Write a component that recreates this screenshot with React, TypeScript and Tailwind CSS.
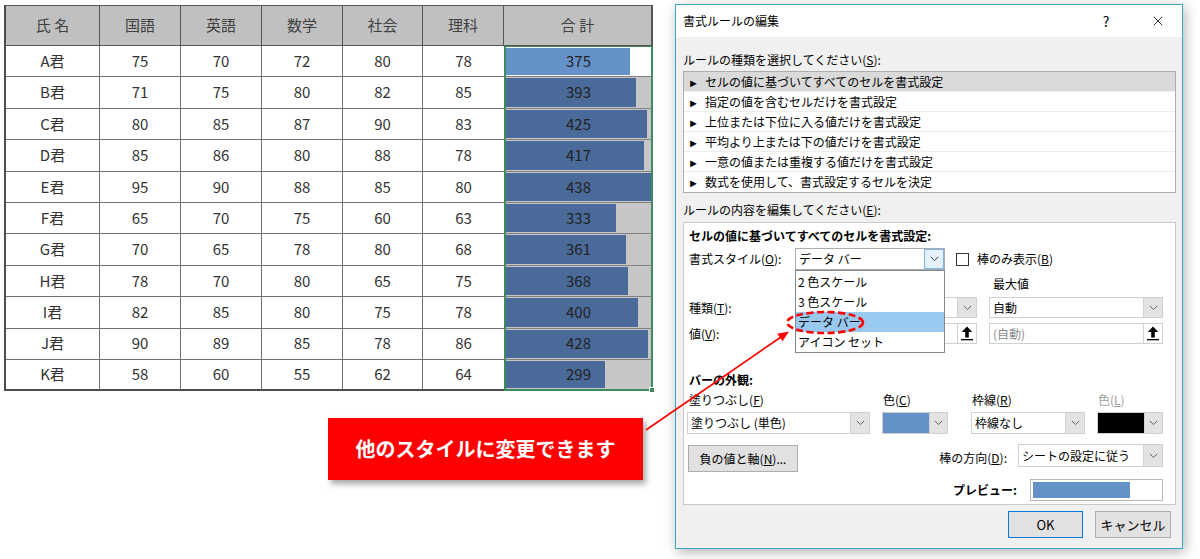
import { X } from "lucide-react";

const scores: [string, number, number, number, number, number, number][] = [
  ["A君", 75, 70, 72, 80, 78, 375],
  ["B君", 71, 75, 80, 82, 85, 393],
  ["C君", 80, 85, 87, 90, 83, 425],
  ["D君", 85, 86, 80, 88, 78, 417],
  ["E君", 95, 90, 88, 85, 80, 438],
  ["F君", 65, 70, 75, 60, 63, 333],
  ["G君", 70, 65, 78, 80, 68, 361],
  ["H君", 78, 70, 80, 65, 75, 368],
  ["I君", 82, 85, 80, 75, 78, 400],
  ["J君", 90, 89, 85, 78, 86, 428],
  ["K君", 58, 60, 55, 62, 64, 299],
];

const heads = ["氏 名", "国語", "英語", "数学", "社会", "理科", "合 計"];

const ruleTypes = [
  "セルの値に基づいてすべてのセルを書式設定",
  "指定の値を含むセルだけを書式設定",
  "上位または下位に入る値だけを書式設定",
  "平均より上または下の値だけを書式設定",
  "一意の値または重複する値だけを書式設定",
  "数式を使用して、書式設定するセルを決定",
];

const MAX = 438;

function ScoreTable() {
  return (
    <div className="ml-[4px] border-l-2 border-[#4d4d4d] grid grid-cols-[94px_81px_81px_81px_80px_81px_149px] text-[15px] text-[#333]">
      {heads.map((h, i) => (
        <div
          key={h}
          className={`h-[41px] flex items-center justify-center bg-[#c0c0c0] text-[#404040] border-t border-b border-r border-[#555] ${
            i === 6 ? "border-r-2" : ""
          }`}
        >
          {h}
        </div>
      ))}
      {scores.map((row, r) => {
        const last = r === scores.length - 1;
        const total = row[6];
        return [
          ...row.slice(0, 6).map((v, c) => (
            <div
              key={`${r}-${c}`}
              className={`h-[31.4px] flex items-center justify-center bg-white border-[#707070] ${
                c < 5 ? "border-r" : ""
              } ${last ? "border-b-2 border-b-[#4d4d4d]" : "border-b"}`}
            >
              {v}
            </div>
          )),
          <div
            key={`${r}-t`}
            className={`relative h-[31.4px] border-x-2 border-[#3f8a5d] ${
              r === 0 ? "border-t border-t-[#3f8a5d] bg-white" : "bg-[#c6c6c6]"
            } ${last ? "border-b-2" : "border-b border-b-[#808080]"}`}
          >
            <div
              className={`absolute left-0 top-[1px] bottom-[1px] ${
                r === 0 ? "bg-[#6591c9]" : "bg-[#4a6a9a]"
              }`}
              style={{ width: `${(total / MAX) * 100}%` }}
            />
            <span className="relative flex h-full items-center justify-center text-[#222]">
              {total}
            </span>
            {last && (
              <div className="absolute -right-[4px] -bottom-[4px] w-[6px] h-[6px] bg-[#3f8a5d] border border-white" />
            )}
          </div>,
        ];
      })}
    </div>
  );
}

function Chevron({ color = "#666" }: { color?: string }) {
  return (
    <svg width="9" height="6" viewBox="0 0 9 6">
      <path d="M0.8 0.8 L4.5 4.6 L8.2 0.8" fill="none" stroke={color} strokeWidth="1" />
    </svg>
  );
}

function UpArrow() {
  return (
    <svg width="12" height="15" viewBox="0 0 12 15">
      <path d="M6 0.5 L11.2 6 L7.8 6 L7.8 11.5 L4.2 11.5 L4.2 6 L0.8 6 Z" fill="#000" />
      <rect x="0" y="13" width="12" height="1.3" fill="#000" />
    </svg>
  );
}

function Select({
  text = "",
  className = "",
}: {
  text?: string;
  className?: string;
}) {
  return (
    <div className={`h-full flex border border-[#d0d0d0] bg-white ${className}`}>
      <span className="flex-1 pl-[3px] flex items-center">{text}</span>
      <div className="w-[19px] flex items-center justify-center bg-[#e3e3e3] border-l border-[#d0d0d0]">
        <Chevron />
      </div>
    </div>
  );
}

function ValueInput({ text = "", className = "" }: { text?: string; className?: string }) {
  return (
    <div className={`h-full flex border border-[#d0d0d0] bg-white ${className}`}>
      <span className="flex-1 pl-[3px] flex items-center text-[#8a8a8a]">{text}</span>
      <div className="w-[19px] flex items-center justify-center border-l border-[#d0d0d0]">
        <UpArrow />
      </div>
    </div>
  );
}

function StyleSelect() {
  const items = ["2 色スケール", "3 色スケール", "データ バー", "アイコン セット"];
  return (
    <div className="relative w-[150px] h-full">
      <div className="h-full flex border border-[#adadad] bg-white">
        <span className="flex-1 pl-[3px] flex items-center">データ バー</span>
        <div className="w-[20px] flex items-center justify-center bg-[#e5f1fb] border border-[#7eb4ea]">
          <Chevron color="#444" />
        </div>
      </div>
      <div className="absolute left-0 top-[22px] w-[150px] z-20 bg-white border border-[#828790] pt-[1px]">
        {items.map((it) => (
          <div
            key={it}
            className={`h-[20px] flex items-center pl-[2px] whitespace-pre ${
              it === "データ バー" ? "bg-[#99c9ef]" : ""
            }`}
          >
            {it}
          </div>
        ))}
      </div>
    </div>
  );
}

function Dialog() {
  return (
    <div className="ml-[21px] mt-[4px] w-[508px] h-[545px] shrink-0 border border-[#3ba6c6] bg-[#f0f0f0] shadow-[2px_3px_12px_rgba(0,0,0,0.3)] flex flex-col text-[12px] leading-[16px] text-black">
      <div className="h-[32px] bg-white flex items-center pl-[7px]">
        <span className="flex-1">書式ルールの編集</span>
        <span className="w-[20px] text-center text-[14px] mr-[34px]">?</span>
        <X size={16} strokeWidth={1.2} className="mr-[16px]" />
      </div>
      <div className="pl-[7px] pr-[5px] pt-[15px] flex flex-col">
        <div className="h-[16px]">
          ルールの種類を選択してください(<u>S</u>):
        </div>
        <div className="mt-[3px] w-[493px] border border-[#adadad] bg-white">
          {ruleTypes.map((t, i) => (
            <div
              key={t}
              className={`h-[20px] flex items-center pl-[4px] ${i === 0 ? "bg-[#dadada]" : ""} ${
                i < 5 ? "border-b border-[#ededed]" : ""
              }`}
            >
              <span className="w-[17px] text-[11px] leading-[16px]">►</span>
              {t}
            </div>
          ))}
        </div>
        <div className="mt-[9px] h-[16px]">
          ルールの内容を編集してください(<u>E</u>):
        </div>
        <div className="mt-[4px] w-[493px] h-[283px] border border-[#c9c9c9] bg-white flex flex-col">
          <div className="mt-[5px] pl-[5px] h-[16px] font-bold">
            セルの値に基づいてすべてのセルを書式設定:
          </div>
          <div className="mt-[4px] h-[22px] pl-[5px] flex items-center">
            <span className="w-[106px]">
              書式スタイル(<u>O</u>):
            </span>
            <StyleSelect />
            <div className="ml-[11px] w-[13px] h-[13px] border border-[#333] bg-white" />
            <span className="ml-[8px]">
              棒のみ表示(<u>B</u>)
            </span>
          </div>
          <div className="mt-[6px] h-[16px] pl-[5px] flex">
            <span className="w-[301px]" />
            <span className="ml-[3px]">最大値</span>
          </div>
          <div className="mt-[5px] h-[21px] pl-[5px] flex items-center">
            <span className="w-[106px]">
              種類(<u>T</u>):
            </span>
            <Select className="w-[182px]" />
            <Select text="自動" className="w-[174px] ml-[12px]" />
          </div>
          <div className="mt-[5px] h-[21px] pl-[5px] flex items-center">
            <span className="w-[106px]">
              値(<u>V</u>):
            </span>
            <ValueInput className="w-[182px]" />
            <ValueInput text="(自動)" className="w-[174px] ml-[12px]" />
          </div>
          <div className="mt-[28px] h-[16px] pl-[5px] font-bold">バーの外観:</div>
          <div className="mt-[4px] h-[16px] pl-[5px] flex">
            <span className="w-[194px]">
              塗りつぶし(<u>F</u>)
            </span>
            <span className="w-[89px]">
              色(<u>C</u>)
            </span>
            <span className="w-[126px]">
              枠線(<u>R</u>)
            </span>
            <span className="text-[#a0a0a0]">
              色(<u>L</u>)
            </span>
          </div>
          <div className="mt-[4px] h-[22px] pl-[3px] flex">
            <Select text="塗りつぶし (単色)" className="w-[183px]" />
            <div className="ml-[12px] w-[66px] h-full flex border border-[#d0d0d0] bg-white">
              <div className="flex-1 bg-[#6591c9]" />
              <div className="w-[18px] flex items-center justify-center bg-[#e3e3e3] border-l border-[#d0d0d0]">
                <Chevron />
              </div>
            </div>
            <Select text="枠線なし" className="w-[114px] ml-[23px]" />
            <div className="ml-[12px] w-[66px] h-full flex border border-[#d0d0d0] bg-white">
              <div className="flex-1 bg-black" />
              <div className="w-[18px] flex items-center justify-center bg-[#e3e3e3] border-l border-[#d0d0d0]">
                <Chevron />
              </div>
            </div>
          </div>
          <div className="mt-[10px] h-[28px] flex items-start">
            <div className="mt-[1px] ml-[4px] w-[110px] h-[27px] flex items-center justify-center bg-[#e1e1e1] border border-[#adadad]">
              負の値と軸(<u>N</u>)...
            </div>
            <span className="flex-1" />
            <span className="self-center">
              棒の方向(<u>D</u>):
            </span>
            <div className="ml-[11px] mr-[12px] w-[145px] h-[23px]">
              <Select text="シートの設定に従う" />
            </div>
          </div>
          <div className="mt-[7px] h-[22px] pr-[12px] flex items-center justify-end">
            <span className="font-bold">プレビュー:</span>
            <div className="ml-[13px] w-[133px] h-full border border-[#b8b8b8] bg-white p-[2px]">
              <div className="w-[97px] h-full bg-[#6591c9]" />
            </div>
          </div>
        </div>
        <div className="mt-[6px] h-[27px] pr-[6px] flex justify-end gap-[12px] text-[13px]">
          <div className="w-[75px] h-full flex items-center justify-center bg-[#e1e1e1] border border-[#0078d7]">
            OK
          </div>
          <div className="w-[76px] h-full flex items-center justify-center bg-[#e1e1e1] border border-[#adadad]">
            キャンセル
          </div>
        </div>
      </div>
    </div>
  );
}

function Annotations() {
  return (
    <svg
      className="absolute inset-0 z-30 pointer-events-none"
      width="1200"
      height="559"
      viewBox="0 0 1200 559"
    >
      <line x1="646" y1="430" x2="781" y2="337" stroke="#ff0000" strokeWidth="1.6" />
      <polygon points="789,331.5 782.5,341.3 777.2,333.8" fill="#ff0000" />
      <ellipse
        cx="825"
        cy="322.5"
        rx="38"
        ry="10.5"
        fill="none"
        stroke="#ff0000"
        strokeWidth="2.6"
        strokeDasharray="7 3.5"
      />
    </svg>
  );
}

export default function App() {
  return (
    <div className="relative w-[1200px] h-[559px] overflow-hidden bg-white flex items-start font-['Noto_Sans_CJK_JP','Noto_Sans',sans-serif]">
      <div className="w-[654px] shrink-0 pt-[5px] flex flex-col">
        <ScoreTable />
        <div className="ml-[328px] mt-[27px] w-[315px] h-[62px] bg-[#ff0000] shadow-[3px_4px_6px_rgba(0,0,0,0.35)] flex items-center justify-center text-white font-bold text-[20px]">
          他のスタイルに変更できます
        </div>
      </div>
      <Dialog />
      <Annotations />
    </div>
  );
}
